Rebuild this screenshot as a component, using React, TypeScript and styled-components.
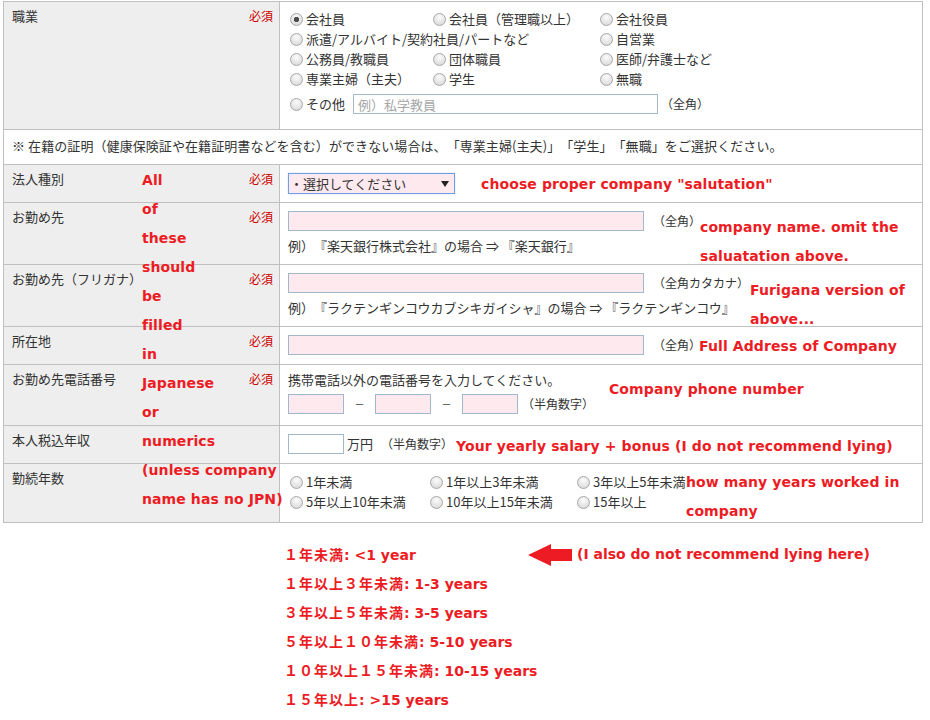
import React from "react";
import styled, { createGlobalStyle } from "styled-components";

const GlobalStyle = createGlobalStyle`
  html, body { margin: 0; padding: 0; background: #fff; }
  body {
    font-family: "Noto Sans CJK JP", "Noto Sans", sans-serif;
    color: #333;
    font-size: 13px;
    text-spacing-trim: space-all;
  }
  * { box-sizing: border-box; }
`;

const Page = styled.div`
  position: relative;
  width: 930px;
  height: 720px;
  padding: 1px 0 0 3px;
  overflow: hidden;
`;

const Form = styled.div`
  width: 920px;
  border: 1px solid #c0c0c0;
  border-bottom: none;
`;

const Row = styled.div<{ $h: number }>`
  display: grid;
  grid-template-columns: 276px 1fr;
  height: ${(p) => p.$h}px;
  border-bottom: 1px solid #c0c0c0;
`;

const NoteRow = styled.div`
  height: 35px;
  padding: 7px 8px 0;
  border-bottom: 1px solid #c0c0c0;
  line-height: 18px;
  white-space: nowrap;
  letter-spacing: 0.08px;
`;

const Label = styled.div`
  display: flex;
  justify-content: space-between;
  align-items: flex-start;
  padding: 5px 6px 0 8px;
  background: #eeeeee;
  border-right: 1px solid #c0c0c0;
  line-height: 18px;
`;

const Required = styled.span`
  color: #cc0000;
  font-size: 12px;
`;

const Cell = styled.div<{ $pt?: number }>`
  padding: ${(p) => p.$pt ?? 8}px 8px 0;
  line-height: 18px;
  min-width: 0;
`;

const RadioGrid = styled.div<{ $cols: string }>`
  display: grid;
  grid-template-columns: ${(p) => p.$cols};
  grid-auto-rows: 20px;
`;

const Choice = styled.label<{ $span?: number }>`
  display: flex;
  align-items: center;
  white-space: nowrap;
  grid-column: span ${(p) => p.$span ?? 1};
`;

const radioBase =
  "radial-gradient(circle at 50% 30%, #fbfbfb 0%, #e6e6e6 55%, #d2d2d2 100%)";

const Radio = styled.input.attrs({ type: "radio" })`
  appearance: none;
  -webkit-appearance: none;
  width: 13px;
  height: 13px;
  margin: 0 3px 0 2px;
  border-radius: 50%;
  border: 1px solid #a8a8a8;
  background: ${radioBase};
  flex: none;
  &:checked {
    background: radial-gradient(circle, #4c4c4c 0 2.3px, transparent 3px),
      ${radioBase};
  }
`;

const InputLine = styled.div<{ $mt?: number }>`
  display: flex;
  align-items: center;
  height: 20px;
  margin-top: ${(p) => p.$mt ?? 0}px;
`;

const TextInput = styled.input<{ $w: number; $pink?: boolean }>`
  width: ${(p) => p.$w}px;
  height: 20px;
  margin: 0;
  padding: 0 4px;
  border: 1px solid #a3b8cd;
  background: ${(p) => (p.$pink ? "#fee9ef" : "#ffffff")};
  font: inherit;
  font-size: 13px;
  color: #333;
  outline: none;
  flex: none;
  &::placeholder {
    color: #a6a6a6;
  }
`;

const Hint = styled.span<{ $ml?: number }>`
  font-size: 12px;
  margin-left: ${(p) => p.$ml ?? 9}px;
  white-space: nowrap;
`;

const Unit = styled.span`
  margin-left: 3px;
`;

const OtherText = styled.span`
  margin-right: 8px;
`;

const Example = styled.div`
  margin-top: 6px;
  white-space: nowrap;
`;

const SelectBox = styled.div`
  display: flex;
  align-items: center;
  justify-content: space-between;
  width: 167px;
  height: 21px;
  border: 1px solid #6f9de6;
  box-shadow: 0 0 1px #9cc0f2;
  background: #fee9ef;
  padding: 0 5px 0 1px;
`;

const PhoneNote = styled.div`
  line-height: 14px;
`;

const Dash = styled.span`
  width: 31px;
  text-align: center;
  font-size: 10px;
`;

const Annot = styled.div<{ $x: number; $y: number }>`
  position: absolute;
  left: ${(p) => p.$x}px;
  top: ${(p) => p.$y}px;
  font-family: "DejaVu Sans", "Noto Sans CJK JP", sans-serif;
  font-weight: bold;
  font-size: 14px;
  line-height: 29px;
  color: #ed1c24;
  white-space: nowrap;
  letter-spacing: 0.1px;
`;

const Legend = styled.div`
  margin: 17px 0 0 281px;
  font-family: "DejaVu Sans", "Noto Sans CJK JP", sans-serif;
  font-weight: bold;
  font-size: 14px;
  line-height: 29px;
  color: #ed1c24;
`;

const LegendLine = styled.div`
  display: flex;
  align-items: center;
  height: 29px;
  white-space: nowrap;
`;

const LegendTerm = styled.span<{ $w?: number }>`
  width: ${(p) => (p.$w ? `${p.$w}px` : "auto")};
`;

const Jp = styled.span`
  font-family: "Noto Sans CJK JP", sans-serif;
  letter-spacing: 1px;
`;

const LegendNote = styled.span`
  margin-left: 5px;
`;

const ArrowIcon = () => (
  <svg width="44" height="22" viewBox="0 0 44 22">
    <path d="M0 11 L23 0 L23 5 L44 5 L44 17 L23 17 L23 22 Z" fill="#ed1c24" />
  </svg>
);

const Caret = () => (
  <svg width="8" height="6" viewBox="0 0 8 6">
    <path d="M0 0 H8 L4 6 Z" fill="#222" />
  </svg>
);

const leftNote = [
  "All",
  "of",
  "these",
  "should",
  "be",
  "filled",
  "in",
  "Japanese",
  "or",
  "numerics",
  "(unless company",
  "name has no JPN)",
];

const legend: [string, string][] = [
  ["１年以上３年未満", ": 1-3 years"],
  ["３年以上５年未満", ": 3-5 years"],
  ["５年以上１０年未満", ": 5-10 years"],
  ["１０年以上１５年未満", ": 10-15 years"],
  ["１５年以上", ": >15 years"],
];

const Lines = ({ items }: { items: string[] }) => (
  <>
    {items.map((t, i) => (
      <div key={i}>{t}</div>
    ))}
  </>
);

export default function App() {
  return (
    <Page>
      <GlobalStyle />
      <Form>
        <Row $h={128}>
          <Label>
            職業<Required>必須</Required>
          </Label>
          <Cell $pt={7}>
            <RadioGrid $cols="143px 167px 1fr">
              <Choice>
                <Radio name="job" defaultChecked />
                会社員
              </Choice>
              <Choice>
                <Radio name="job" />
                会社員（管理職以上）
              </Choice>
              <Choice>
                <Radio name="job" />
                会社役員
              </Choice>
              <Choice $span={2}>
                <Radio name="job" />
                派遣/アルバイト/契約社員/パートなど
              </Choice>
              <Choice>
                <Radio name="job" />
                自営業
              </Choice>
              <Choice>
                <Radio name="job" />
                公務員/教職員
              </Choice>
              <Choice>
                <Radio name="job" />
                団体職員
              </Choice>
              <Choice>
                <Radio name="job" />
                医師/弁護士など
              </Choice>
              <Choice>
                <Radio name="job" />
                専業主婦（主夫）
              </Choice>
              <Choice>
                <Radio name="job" />
                学生
              </Choice>
              <Choice>
                <Radio name="job" />
                無職
              </Choice>
            </RadioGrid>
            <InputLine $mt={5}>
              <Radio name="job" />
              <OtherText>その他</OtherText>
              <TextInput $w={305} placeholder="例）私学教員" />
              <Hint $ml={3}>（全角）</Hint>
            </InputLine>
          </Cell>
        </Row>

        <NoteRow>
          ※ 在籍の証明（健康保険証や在籍証明書などを含む）ができない場合は、「専業主婦(主夫)」「学生」「無職」をご選択ください。
        </NoteRow>

        <Row $h={38}>
          <Label>
            法人種別<Required>必須</Required>
          </Label>
          <Cell>
            <SelectBox>
              <span>・選択してください</span>
              <Caret />
            </SelectBox>
          </Cell>
        </Row>

        <Row $h={62}>
          <Label>
            お勤め先<Required>必須</Required>
          </Label>
          <Cell>
            <InputLine>
              <TextInput $w={356} $pink />
              <Hint>（全角）</Hint>
            </InputLine>
            <Example>例）『楽天銀行株式会社』の場合 ⇒ 『楽天銀行』</Example>
          </Cell>
        </Row>

        <Row $h={62}>
          <Label>
            お勤め先（フリガナ）<Required>必須</Required>
          </Label>
          <Cell>
            <InputLine>
              <TextInput $w={356} $pink />
              <Hint>（全角カタカナ）</Hint>
            </InputLine>
            <Example>
              例）『ラクテンギンコウカブシキガイシャ』の場合 ⇒ 『ラクテンギンコウ』
            </Example>
          </Cell>
        </Row>

        <Row $h={38}>
          <Label>
            所在地<Required>必須</Required>
          </Label>
          <Cell>
            <InputLine>
              <TextInput $w={356} $pink />
              <Hint>（全角）</Hint>
            </InputLine>
          </Cell>
        </Row>

        <Row $h={61}>
          <Label>
            お勤め先電話番号<Required>必須</Required>
          </Label>
          <Cell>
            <PhoneNote>携帯電話以外の電話番号を入力してください。</PhoneNote>
            <InputLine $mt={7}>
              <TextInput $w={56} $pink />
              <Dash>－</Dash>
              <TextInput $w={56} $pink />
              <Dash>－</Dash>
              <TextInput $w={56} $pink />
              <Hint $ml={4}>（半角数字）</Hint>
            </InputLine>
          </Cell>
        </Row>

        <Row $h={38}>
          <Label>本人税込年収</Label>
          <Cell>
            <InputLine>
              <TextInput $w={56} />
              <Unit>万円</Unit>
              <Hint $ml={8}>（半角数字）</Hint>
            </InputLine>
          </Cell>
        </Row>

        <Row $h={59}>
          <Label>勤続年数</Label>
          <Cell>
            <RadioGrid $cols="140px 147px 1fr">
              <Choice>
                <Radio name="years" />
                1年未満
              </Choice>
              <Choice>
                <Radio name="years" />
                1年以上3年未満
              </Choice>
              <Choice>
                <Radio name="years" />
                3年以上5年未満
              </Choice>
              <Choice>
                <Radio name="years" />
                5年以上10年未満
              </Choice>
              <Choice>
                <Radio name="years" />
                10年以上15年未満
              </Choice>
              <Choice>
                <Radio name="years" />
                15年以上
              </Choice>
            </RadioGrid>
          </Cell>
        </Row>
      </Form>

      <Legend>
        <LegendLine>
          <LegendTerm $w={244}>
            <Jp>１年未満</Jp>: &lt;1 year
          </LegendTerm>
          <ArrowIcon />
          <LegendNote>(I also do not recommend lying here)</LegendNote>
        </LegendLine>
        {legend.map(([jp, en]) => (
          <LegendLine key={jp}>
            <LegendTerm>
              <Jp>{jp}</Jp>
              {en}
            </LegendTerm>
          </LegendLine>
        ))}
      </Legend>

      <Annot $x={142} $y={166}>
        <Lines items={leftNote} />
      </Annot>
      <Annot $x={481} $y={170}>choose proper company "salutation"</Annot>
      <Annot $x={700} $y={213}>
        <Lines items={["company name. omit the", "saluatation above."]} />
      </Annot>
      <Annot $x={750} $y={276}>
        <Lines items={["Furigana version of", "above..."]} />
      </Annot>
      <Annot $x={699} $y={332}>Full Address of Company</Annot>
      <Annot $x={609} $y={375}>Company phone number</Annot>
      <Annot $x={456} $y={432}>Your yearly salary + bonus (I do not recommend lying)</Annot>
      <Annot $x={686} $y={468}>
        <Lines items={["how many years worked in", "company"]} />
      </Annot>
    </Page>
  );
}
